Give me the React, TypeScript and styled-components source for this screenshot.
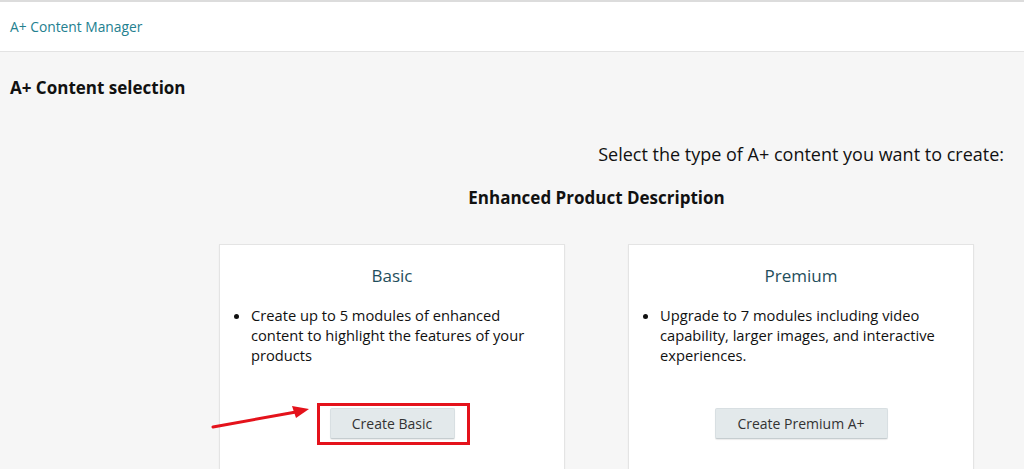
import React from "react";
import styled, { createGlobalStyle } from "styled-components";

const GlobalStyle = createGlobalStyle`
	html, body {
		margin: 0;
		padding: 0;
		background: #f6f6f6;
		font-family: "Open Sans", "Noto Sans", Arial, sans-serif;
		color: #111;
		overflow: hidden;
	}
`;

const Page = styled.div`
	width: 1024px;
	height: 469px;
	overflow: hidden;
	background: #f6f6f6;
`;

const Header = styled.header`
	background: #fff;
	border-top: 2px solid #dcdcdc;
	border-bottom: 1px solid #e3e3e3;
	display: flex;
	align-items: center;
	padding-left: 10px;
	box-sizing: border-box;
	height: 52px;
`;

const HeaderLink = styled.span`
	font-size: 13.8px;
	color: #23808f; /* teal link */
`;

const Main = styled.main`
	padding: 24px 20px 0 10px;
`;

const PageTitle = styled.h1`
	margin: 0;
	font-size: 17px;
	font-weight: 700;
	line-height: 24px;
`;

const Prompt = styled.p`
	margin: 42px 0 0;
	text-align: right;
	font-size: 18px;
	line-height: 24px;
	color: #111;
`;

const Section = styled.section`
	margin-left: 209px;
	width: 755px;
`;

const SectionTitle = styled.h2`
	margin: 20px 0 0;
	text-align: center;
	font-size: 17px;
	font-weight: 700;
	line-height: 24px;
`;

const CardRow = styled.div`
	display: flex;
	gap: 63px;
	margin-top: 34px;
`;

const Card = styled.div`
	width: 346px;
	height: 240px;
	box-sizing: border-box;
	background: #fff;
	border: 1px solid #e4e4e4;
	box-shadow: 0 1px 2px rgba(0, 0, 0, 0.04);
	padding: 19px 30px 0 10px;
	display: flex;
	flex-direction: column;
`;

const CardTitle = styled.h3`
	margin: 0;
	text-align: center;
	font-size: 17px;
	font-weight: 400;
	line-height: 24px;
	color: #1f4e5c;
	padding-left: 20px;
`;

const Bullets = styled.ul`
	margin: 17px 0 0;
	padding-left: 21px;
	font-size: 14.7px;
	line-height: 20px;
	color: #111;
	height: 80px;
`;

const ButtonSlot = styled.div`
	display: flex;
	justify-content: center;
	margin-top: 23px;
	padding-left: 20px;
`;

const Marked = styled.div`
	position: relative;
`;

const Highlight = styled.div`
	position: absolute;
	left: -13px;
	right: -15px;
	top: -5px;
	bottom: -6px;
	border: 3px solid #e4121b;
	pointer-events: none;
`;

const Arrow = styled.svg`
	position: absolute;
	left: -118px;
	top: -2px;
	overflow: visible;
`;

const ActionButton = styled.button<{ $width: number }>`
	width: ${(p) => p.$width}px;
	font-family: inherit;
	font-size: 14px;
	color: #333;
	background: #e3e9eb;
	border: 1px solid #d8dfe2;
	border-bottom-color: #c6cdd0;
	border-radius: 2px;
	box-shadow: 0 1px 1px rgba(0, 0, 0, 0.08);
	height: 31px;
	padding: 0;
	cursor: pointer;
`;

const App: React.FC = (): React.ReactElement => {
	return (
		<Page>
			<GlobalStyle />
			<Header>
				<HeaderLink>A+ Content Manager</HeaderLink>
			</Header>
			<Main>
				<PageTitle>A+ Content selection</PageTitle>
				<Prompt>Select the type of A+ content you want to create:</Prompt>
				<Section>
					<SectionTitle>Enhanced Product Description</SectionTitle>
					<CardRow>
						<Card>
							<CardTitle>Basic</CardTitle>
							<Bullets>
								<li>
									Create up to 5 modules of enhanced content to highlight the
									features of your products
								</li>
							</Bullets>
							<ButtonSlot>
								<Marked>
									<ActionButton $width={125}>Create Basic</ActionButton>
									<Highlight />
									<Arrow width="100" height="24" viewBox="0 0 100 24">
										<line x1="1" y1="21" x2="84" y2="6" stroke="#e4121b" strokeWidth="3" strokeLinecap="round" />
										<polygon points="97,3 80,0 84,12" fill="#e4121b" />
									</Arrow>
								</Marked>
							</ButtonSlot>
						</Card>
						<Card>
							<CardTitle>Premium</CardTitle>
							<Bullets>
								<li>
									Upgrade to 7 modules including video capability, larger
									images, and interactive experiences.
								</li>
							</Bullets>
							<ButtonSlot>
								<ActionButton $width={173}>Create Premium A+</ActionButton>
							</ButtonSlot>
						</Card>
					</CardRow>
				</Section>
			</Main>
		</Page>
	);
};

export default App;
